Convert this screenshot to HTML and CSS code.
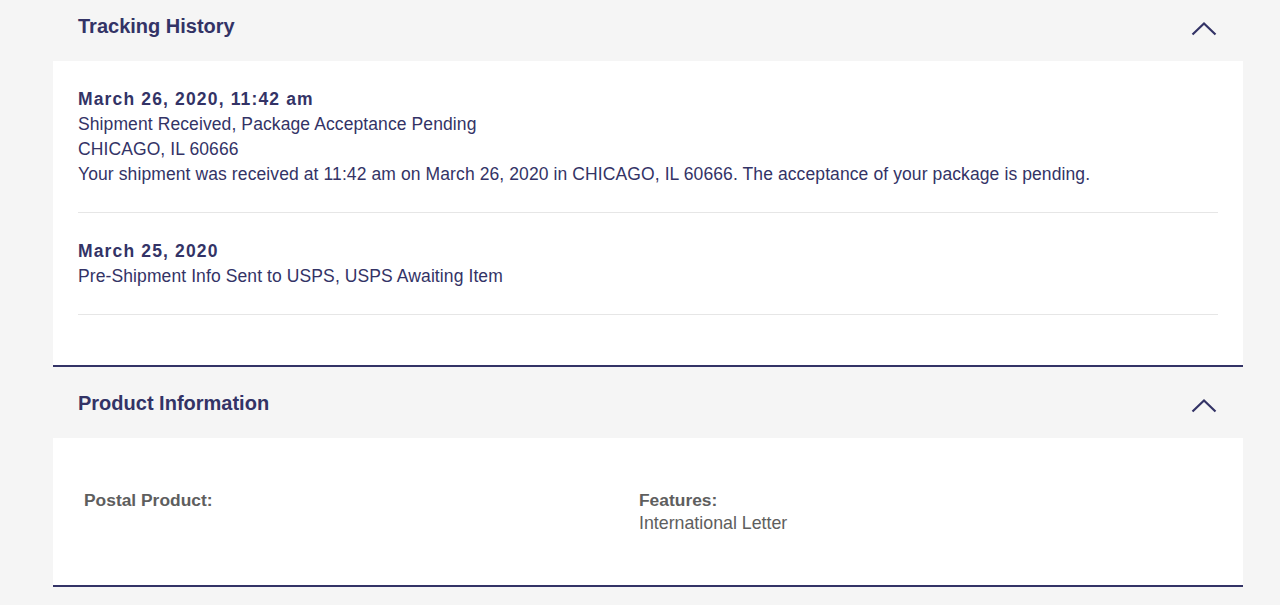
FILE: index.html
```html
<!DOCTYPE html>
<html lang="en">
  <head>
    <meta charset="UTF-8" />
    <meta name="viewport" content="width=device-width, initial-scale=1.0" />
    <title>Tracking Details</title>
    <link rel="stylesheet" href="styles.css">
  </head>
  <body>
    <main class="page">
      <!-- Tracking History -->
      <section class="panel">
        <div class="panel-header">
          <h2>Tracking History</h2>
          <svg class="chevron" width="26" height="15" viewBox="0 0 26 15">
            <polyline points="1.5,13.5 13,2.5 24.5,13.5" />
          </svg>
        </div>
        <div class="panel-body history">
          <div class="event">
            <p class="event-date">March 26, 2020, 11:42 am</p>
            <p>Shipment Received, Package Acceptance Pending</p>
            <p>CHICAGO, IL 60666</p>
            <p>Your shipment was received at 11:42 am on March 26, 2020 in CHICAGO, IL 60666. The acceptance of your package is pending.</p>
          </div>
          <div class="event">
            <p class="event-date">March 25, 2020</p>
            <p>Pre-Shipment Info Sent to USPS, USPS Awaiting Item</p>
          </div>
        </div>
      </section>

      <!-- Product Information -->
      <section class="panel">
        <div class="panel-header">
          <h2>Product Information</h2>
          <svg class="chevron" width="26" height="15" viewBox="0 0 26 15">
            <polyline points="1.5,13.5 13,2.5 24.5,13.5" />
          </svg>
        </div>
        <div class="panel-body product">
          <div class="product-col">
            <h4>Postal Product:</h4>
          </div>
          <div class="product-col">
            <h4>Features:</h4>
            <p>International Letter</p>
          </div>
        </div>
      </section>
    </main>
  </body>
</html>
```

FILE: styles.css
```css
* {
  box-sizing: border-box;
  margin: 0;
  padding: 0;
}

html,
body {
  font-family: "Liberation Sans", Arial, sans-serif;
  background: #f5f5f5;
  color: #333366;
  width: 100%;
  overflow: hidden;
}

/* Main Layout */
.page {
  width: 1190px;
  margin: -10px 0 0 53px;
}

.panel {
  border-bottom: 2px solid #333366;
}

.panel-header {
  display: flex;
  align-items: center;
  justify-content: space-between;
  height: 71px;
  padding: 2px 26px 0 25px;
  background: #f5f5f5;
}

.panel-header h2 {
  font-size: 20px;
  font-weight: bold;
  color: #333366;
}

.chevron {
  margin-top: 3px;
}

.chevron polyline {
  fill: none;
  stroke: #333366;
  stroke-width: 2.2;
}

.panel-body {
  background: white;
  padding: 0 25px;
}

/* Tracking events */
.history {
  padding-bottom: 50px;
}

.event {
  padding: 26px 0 25px;
  border-bottom: 1px solid #e6e6e6;
  font-size: 17.5px;
  letter-spacing: 0.1px;
  line-height: 25px;
}

.event-date {
  font-weight: bold;
  letter-spacing: 1.15px;
}

/* Product info */
.product {
  display: grid;
  grid-template-columns: 555px 1fr;
  padding: 50px 25px 50px 31px;
  min-height: 146px;
  color: #5e5e5e;
}

.product-col h4 {
  font-size: 17.4px;
  font-weight: bold;
  line-height: 24px;
}

.product-col p {
  font-size: 17.8px;
  line-height: 23px;
}
```
